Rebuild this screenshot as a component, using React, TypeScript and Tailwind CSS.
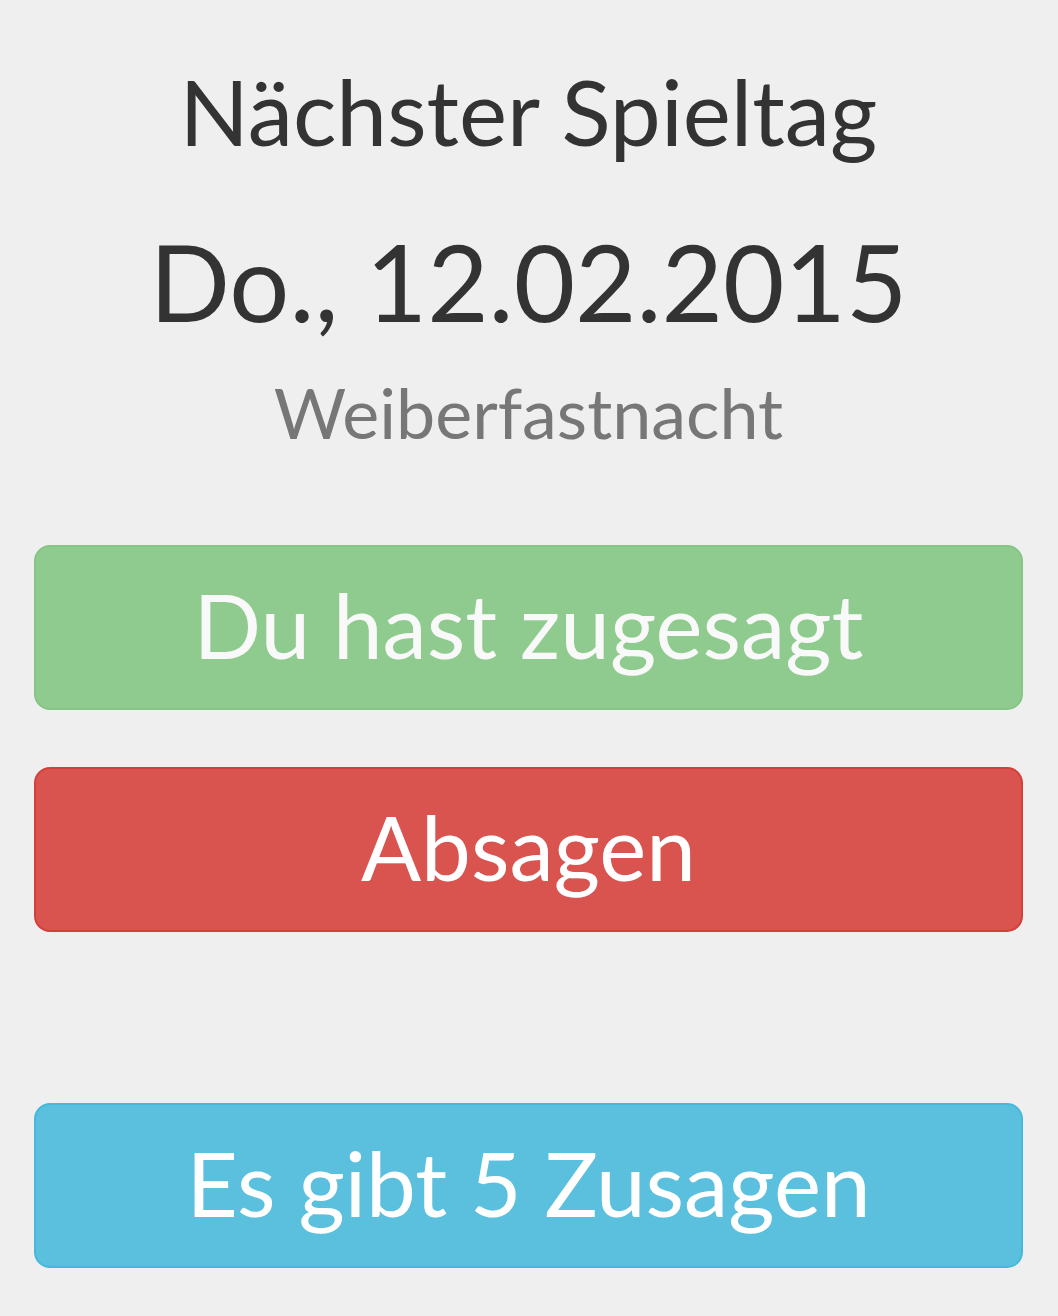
import React from 'react';

const font = { fontFamily: 'Lato, "Noto Sans", sans-serif' };

const ActionButton: React.FC<{ label: string; className: string }> = ({ label, className }) => (
  <button
    type="button"
    className={`flex h-[165px] w-full items-center justify-center rounded-[16px] border-2 pb-[6px] text-[89px] leading-none ${className}`}
  >
    {label}
  </button>
);

const App: React.FC = () => {
  return (
    <div className="min-h-[1316px] w-full bg-[#efefef] text-[#333333]" style={font}>
      <div className="flex flex-col items-center pt-[56px] pl-[34px] pr-[35px]">
        <h1 className="text-[91px] leading-[1.2] font-normal">Nächster Spieltag</h1>
        <h2 className="mt-[53px] text-[106px] leading-[1.2] font-normal">Do., 12.02.2015</h2>
        <p className="mt-[25px] text-[70px] leading-[1.2] text-[#777777]">Weiberfastnacht</p>

        <div className="mt-[91px] flex w-full flex-col">
          <ActionButton label="Du hast zugesagt" className="border-[#85c585] bg-[#8fcb8f] text-[#f9f9f9]" />
          <div className="mt-[57px]">
            <ActionButton label="Absagen" className="border-[#d43f3a] bg-[#d9534f] text-white" />
          </div>
          <div className="mt-[171px]">
            <ActionButton label="Es gibt 5 Zusagen" className="border-[#46b8da] bg-[#5bc0de] text-white" />
          </div>
        </div>
      </div>
    </div>
  );
};

export default App;
